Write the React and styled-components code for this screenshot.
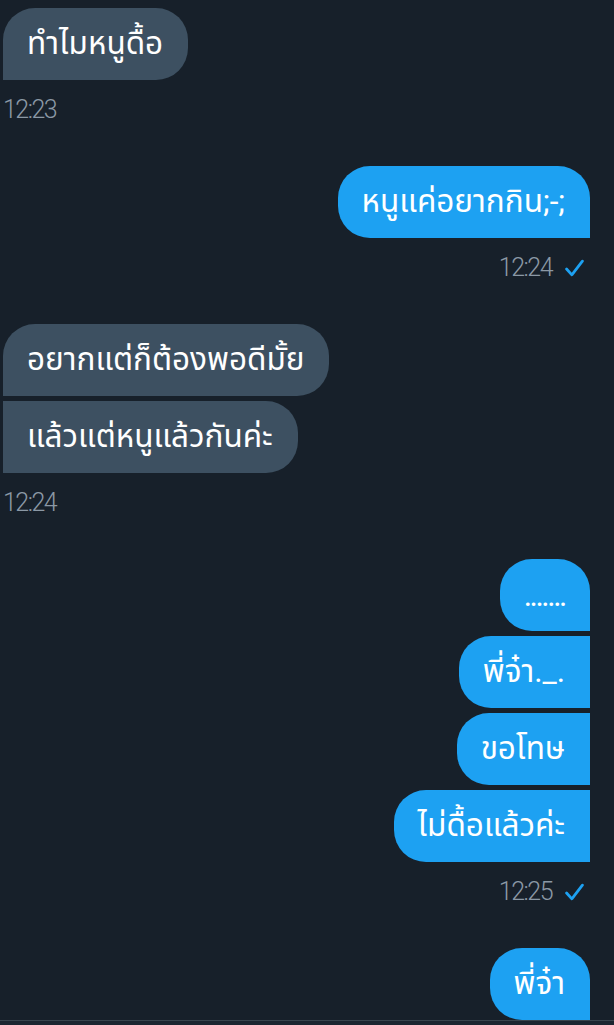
import React from 'react'
import styled, { createGlobalStyle, css } from 'styled-components'

const GlobalStyle = createGlobalStyle`
  html, body {
    margin: 0;
    padding: 0;
    background: #17202a;
    overflow: hidden;
  }
  #root {
    height: 1025px;
  }
`

const Screen = styled.div`
  display: flex;
  flex-direction: column;
  height: 1025px;
  background: #17202a;
  font-family: Roboto, "Noto Sans Thai", "Noto Sans", sans-serif;
`

const Thread = styled.div`
  flex: 1;
  display: flex;
  flex-direction: column;
  gap: 43px;
  padding: 8px 24px 0 3px;
`

const Group = styled.div`
  display: flex;
  flex-direction: column;
  align-items: ${(p) => (p.$mine ? 'flex-end' : 'flex-start')};
  gap: 5px;
`

const Bubble = styled.div`
  height: 72px;
  display: flex;
  align-items: center;
  padding: 0 25px 0 24px;
  box-sizing: border-box;
  font-size: 31.5px;
  letter-spacing: ${(p) => (p.$dots ? '-2.4px' : 'normal')};
  color: #ffffff;
  white-space: nowrap;
  background: ${(p) => (p.$mine ? '#1da1f2' : '#3d5061')};
  border-radius: 32px;
  ${(p) =>
    p.$mine
      ? css`
          border-bottom-right-radius: 0;
          ${!p.$first && 'border-top-right-radius: 0;'}
        `
      : css`
          border-bottom-left-radius: 0;
          ${!p.$first && 'border-top-left-radius: 0;'}
        `}
`

const Meta = styled.div`
  display: flex;
  align-items: center;
  gap: 13px;
  margin-top: 12px;
  padding-right: ${(p) => (p.$mine ? '6px' : '0')};
  font-family: Roboto, sans-serif;
  font-weight: 300;
  font-size: 25px;
  letter-spacing: -1.5px;
  line-height: 26px;
  color: #8b98a5;
`

const Footer = styled.div`
  height: 6px;
  border-top: 1px solid #38444d;
  background: #1b2530;
`

function Check() {
  return (
    <svg width="19" height="19" viewBox="0 0 18 18">
      <path d="M1.5 9.5 L6.5 15 L16.5 2" fill="none" stroke="#1da1f2" strokeWidth="2.6" strokeLinecap="round" strokeLinejoin="round" />
    </svg>
  )
}

const thread = [
  { mine: false, time: '12:23', lines: ['ทำไมหนูดื้อ'] },
  { mine: true, time: '12:24', lines: ['หนูแค่อยากกิน;-;'] },
  { mine: false, time: '12:24', lines: ['อยากแต่ก็ต้องพอดีมั้ย', 'แล้วแต่หนูแล้วกันค่ะ'] },
  { mine: true, time: '12:25', lines: ['.......', 'พี่จ๋า._.', 'ขอโทษ', 'ไม่ดื้อแล้วค่ะ'] },
  { mine: true, lines: ['พี่จ๋า'] },
]

export default function App() {
  return (
    <Screen>
      <GlobalStyle />
      <Thread>
        {thread.map((g, i) => (
          <Group key={i} $mine={g.mine}>
            {g.lines.map((t, j) => (
              <Bubble key={j} $mine={g.mine} $first={j === 0} $dots={/^\.+$/.test(t)}>
                {t}
              </Bubble>
            ))}
            {g.time && (
              <Meta $mine={g.mine}>
                {g.time}
                {g.mine && <Check />}
              </Meta>
            )}
          </Group>
        ))}
      </Thread>
      <Footer />
    </Screen>
  )
}
